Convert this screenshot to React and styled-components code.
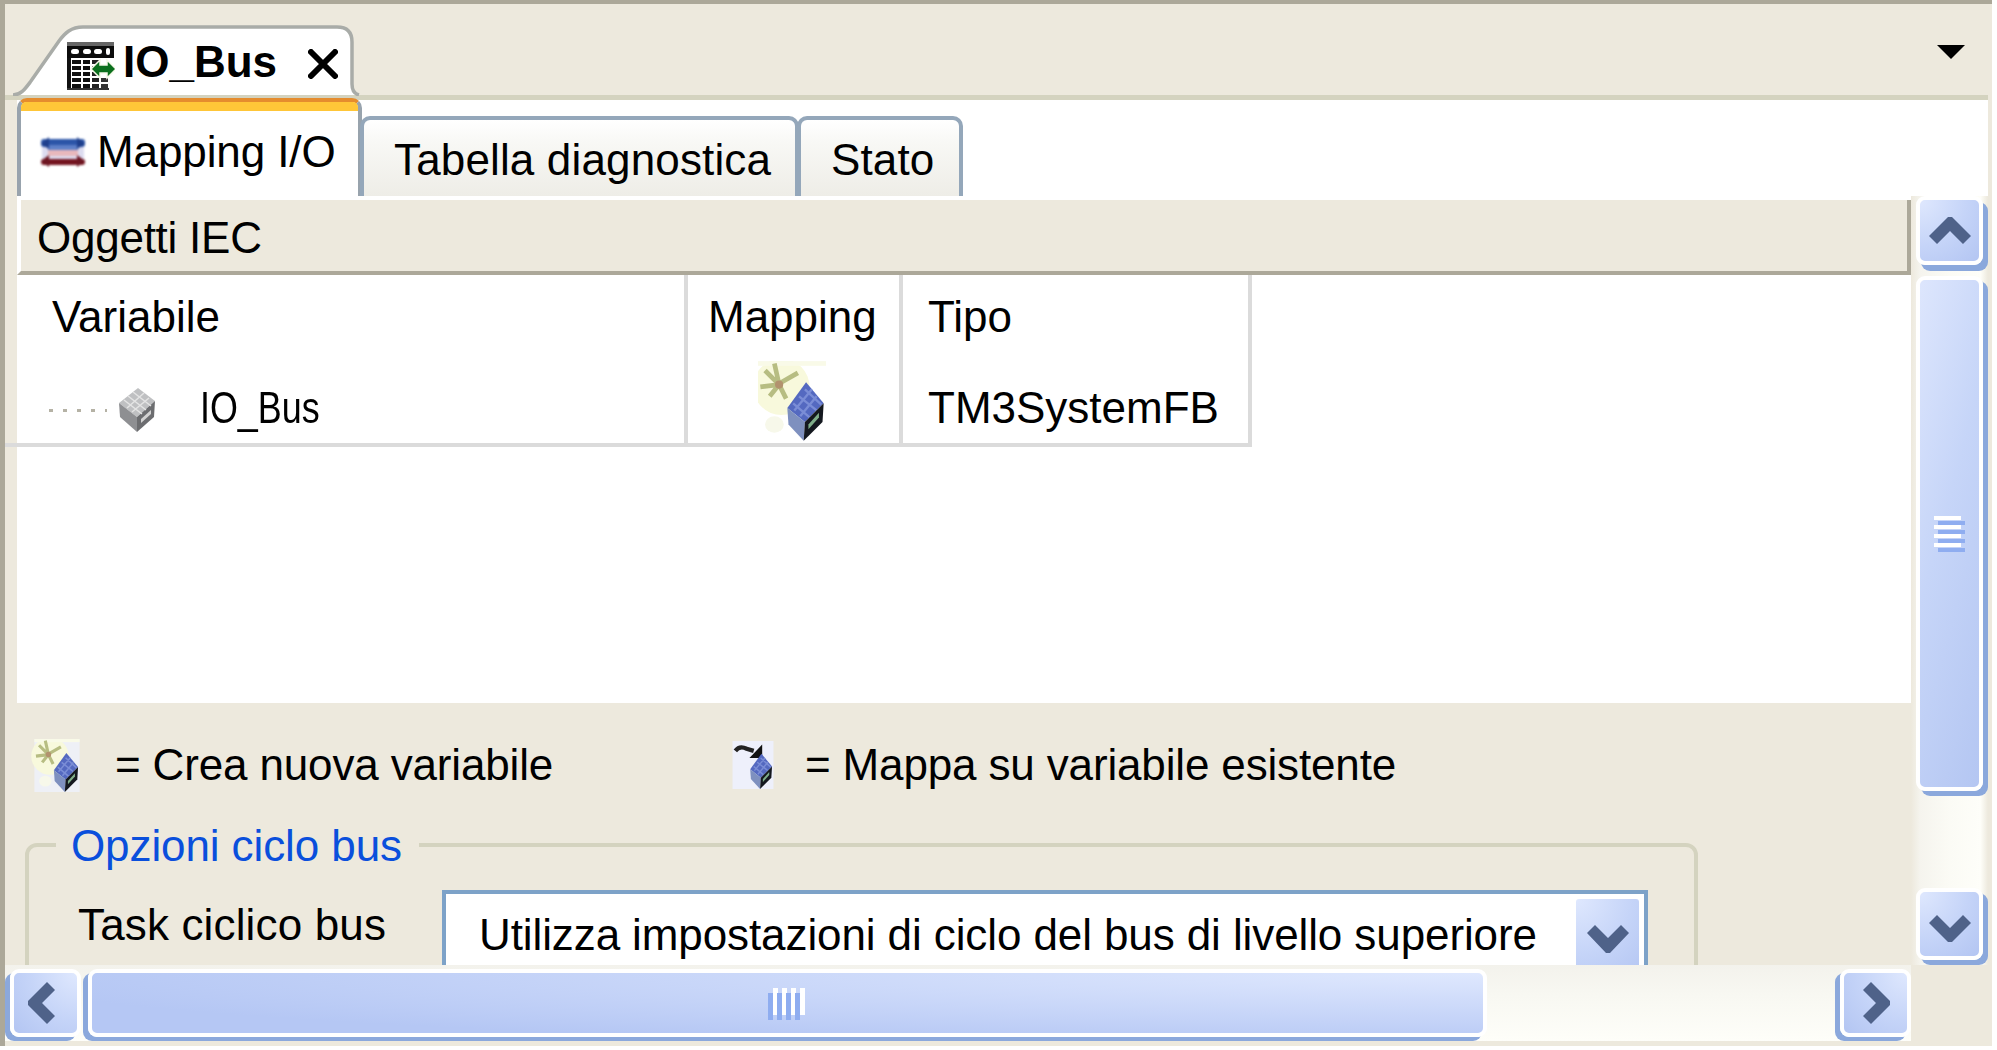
import React from "react";
import styled, { createGlobalStyle } from "styled-components";

const GlobalStyle = createGlobalStyle`
  html, body {
    margin: 0;
    padding: 0;
    background: #fff;
  }
  body {
    font-family: "Liberation Sans", Arial, sans-serif;
    font-size: 44px;
    color: #000;
  }
`;

const Frame = styled.div`
  box-sizing: border-box;
  width: 1992px;
  height: 1046px;
  background: #ede9dd;
  border-top: 4px solid #aca899;
  border-left: 5px solid #aca899;
  display: flex;
  flex-direction: column;
  overflow: hidden;
`;

const DocBar = styled.div`
  flex: none;
  box-sizing: border-box;
  height: 96px;
  margin-right: 4px;
  border-bottom: 5px solid #d4d3bf;
  display: flex;
  justify-content: space-between;
`;

const DocTab = styled.div`
  position: relative;
  width: 354px;
  flex: none;
`;

const DocTabShape = styled.svg`
  position: absolute;
  left: 0;
  top: 0;
`;

const DocTabBody = styled.div`
  position: relative;
  display: flex;
  align-items: flex-start;
  padding: 38px 0 0 62px;
  font-weight: 700;
  line-height: 48px;
`;

const DocTabLabel = styled.span`
  margin: -4px 0 0 8px;
`;

const CloseMark = styled.svg`
  margin: 7px 0 0 31px;
`;

const MenuArrow = styled.div`
  width: 0;
  height: 0;
  margin: 41px 23px 0 0;
  border-left: 14px solid transparent;
  border-right: 14px solid transparent;
  border-top: 14px solid #000;
`;

const Content = styled.div`
  flex: none;
  height: 865px;
  display: flex;
  flex-direction: column;
`;

const TabStrip = styled.div`
  flex: none;
  height: 96px;
  margin: 0 4px 0 12px;
  background: #fff;
  display: flex;
  align-items: flex-end;
`;

const SubTab = styled.div`
  box-sizing: border-box;
  position: relative;
  display: flex;
  align-items: center;
  height: 80px;
  width: ${(p) => p.$width}px;
  padding: 4px 0 0 ${(p) => p.$pad}px;
  background: linear-gradient(#fff 0, #f8f8f5 30%, #eeede7 100%);
  border: 4px solid #94a7ba;
  border-bottom: none;
  border-radius: 10px 10px 0 0;
  line-height: 48px;
  letter-spacing: 0.15px;
  margin-left: -2px;
`;

const ActiveTab = styled.div`
  box-sizing: border-box;
  position: relative;
  height: 98px;
  width: ${(p) => p.$width}px;
  padding-left: ${(p) => p.$pad}px;
  background: #fff;
  border: 4px solid #98a3ad;
  border-top-color: #e58c2e;
  border-bottom: none;
  border-radius: 10px 10px 0 0;
  line-height: 48px;
`;

const ActiveStripe = styled.div`
  position: absolute;
  left: 0;
  right: 0;
  top: 0;
  height: 9px;
  background: #ffc638;
  border-radius: 5px 5px 0 0;
`;

const ActiveInner = styled.div`
  display: flex;
  align-items: center;
  margin-top: 26px;
`;

const TabLabel = styled.span`
  margin-left: 11px;
  letter-spacing: -0.1px;
`;

const Lower = styled.div`
  flex: 1;
  display: flex;
  min-height: 0;
`;

const MainPane = styled.div`
  flex: none;
  box-sizing: border-box;
  width: 1906px;
  padding-left: 12px;
  overflow: hidden;
`;

const ObjectsPane = styled.div`
  height: 507px;
  background: #fff;
  padding-top: 4px;
  box-sizing: border-box;
`;

const SectionHeader = styled.div`
  box-sizing: border-box;
  height: 75px;
  padding-left: 16px;
  background: #ede9dd;
  border-left: 4px solid #fff;
  border-bottom: 4px solid #aca899;
  border-right: 4px solid #aca899;
  line-height: 76px;
  letter-spacing: -0.25px;
`;

const MapTable = styled.div`
  display: grid;
  grid-template-columns: 671px 215px 349px;
  width: 1235px;
  margin-left: -13px;
  padding-left: 13px;
  border-bottom: 4px solid #dbdbdb;
`;

const Cell = styled.div`
  box-sizing: border-box;
  height: 84px;
  padding: ${(p) => p.$top || 0}px 0 0 ${(p) => p.$pad}px;
  border-right: 4px solid #dbdbdb;
  display: flex;
  align-items: center;
  line-height: 48px;
`;

const TreeDots = styled.span`
  width: 58px;
  height: 3px;
  margin: 4px 11px 0 0;
  background: repeating-linear-gradient(90deg, #b5b2a5 0 4px, transparent 4px 14px);
`;

const NarrowName = styled.span`
  display: inline-block;
  margin-left: 44px;
  transform: scaleX(0.815);
  transform-origin: left center;
`;

const LegendRow = styled.div`
  box-sizing: border-box;
  display: flex;
  align-items: center;
  height: 110px;
  padding: 14px 0 0 14px;
`;

const LegendItem = styled.div`
  display: flex;
  align-items: center;
  width: ${(p) => (p.$width ? `${p.$width}px` : "auto")};
`;

const LegendText = styled.span`
  margin-left: ${(p) => p.$gap}px;
  letter-spacing: -0.15px;
`;

const Group = styled.div`
  box-sizing: border-box;
  position: relative;
  width: 1673px;
  height: 300px;
  margin: 30px 0 0 8px;
  border: 4px solid #d4d3bf;
  border-radius: 12px;
`;

const GroupTitle = styled.div`
  position: absolute;
  left: 27px;
  top: -25px;
  padding: 0 17px 0 15px;
  background: #ede9dd;
  color: #0a4fdc;
  line-height: 48px;
  letter-spacing: -0.1px;
`;

const GroupRow = styled.div`
  display: flex;
  margin-top: 43px;
`;

const TaskLabel = styled.span`
  box-sizing: border-box;
  width: 413px;
  margin-top: 11px;
  padding-left: 49px;
  line-height: 48px;
  letter-spacing: 0.15px;
`;

const Combo = styled.div`
  box-sizing: border-box;
  width: 1206px;
  height: 120px;
  border: 4px solid #7da2c8;
  background: #fff;
  display: flex;
  justify-content: space-between;
  padding: 5px 5px 0 33px;
`;

const ComboText = styled.span`
  line-height: 60px;
  padding-top: 6px;
  letter-spacing: -0.1px;
`;

const ComboButton = styled.div`
  box-sizing: border-box;
  width: 63px;
  height: 80px;
  border-radius: 3px;
  padding-top: 26px;
  display: flex;
  justify-content: center;
  align-items: flex-start;
  background: radial-gradient(circle at 0 0, #dfe8fe 0, #c5d4f8 55%, #b3c5f2 100%);
`;

const VScroll = styled.div`
  flex: none;
  box-sizing: border-box;
  width: 77px;
  padding: 0 5px;
  display: flex;
  flex-direction: column;
  background: linear-gradient(90deg, #ede9dd 0, #f5f4ee 12%, #fbfbf5 50%, #fefef9 90%, #ede9dd 100%);
`;

const HScroll = styled.div`
  flex: none;
  box-sizing: border-box;
  width: 1906px;
  height: 76px;
  padding: 4px 0;
  display: flex;
  align-items: stretch;
  background: linear-gradient(180deg, #f3f2ec 0, #f8f8f2 40%, #fefef9 100%);
`;

const ScrollPart = styled.div`
  box-sizing: border-box;
  flex: none;
  width: ${(p) => (p.$w ? `${p.$w}px` : "auto")};
  height: ${(p) => (p.$h ? `${p.$h}px` : "auto")};
  margin: ${(p) => p.$mt || 0}px 0 0 ${(p) => p.$ml || 0}px;
  padding: ${(p) => p.$pt || 0}px ${(p) => p.$pr || 0}px 0 0;
  border: 4px solid #fff;
  border-radius: 9px;
  background: radial-gradient(circle at ${(p) => p.$from || "100% 0"}, #dfe8fe 0, #c5d4f8 55%, #b3c5f2 100%);
  box-shadow: ${(p) => p.$shadow || "5px 5px 0 #8ba8dc"};
  display: flex;
  align-items: center;
  justify-content: center;
`;

const VThumb = styled(ScrollPart)`
  background: linear-gradient(105deg, #dde6fd 0, #c6d5f8 45%, #b4c6f2 100%);
`;

const HThumb = styled(ScrollPart)`
  background: radial-gradient(ellipse 1500px 75px at 100% 0, #dfe8fe 0, #b5c7f4 100%);
`;

const VGripBar = styled.div`
  width: 27px;
  height: 4px;
  margin-bottom: 5px;
  background: #fff;
  box-shadow: 4px 5px 0 #8fadf0;
`;

const HGripBar = styled.div`
  width: 5px;
  height: 27px;
  margin-right: 4px;
  background: #fff;
  box-shadow: -5px 5px 0 #8fadf0;
`;

const Grip = styled.div`
  display: flex;
  flex-direction: ${(p) => (p.$column ? "column" : "row")};
  margin-right: ${(p) => p.$shift || 0}px;
  margin-bottom: ${(p) => p.$lift || 0}px;
`;

const Chevron = ({ dir }) => {
  const turn = { up: 0, right: 90, down: 180, left: 270 }[dir];
  return (
    <svg width="42" height="42" viewBox="0 0 42 42">
      <polygon
        points="19,7 23,7 42,26 34,34 21,21 8,34 0,26"
        fill="#4f6289"
        transform={`rotate(${turn} 21 21)`}
      />
    </svg>
  );
};

const FlatChevron = styled.svg`
  flex: none;
`;

const DownChevron = () => (
  <FlatChevron width="42" height="28" viewBox="0 0 42 28">
    <polygon points="19,28 23,28 42,8 34,0 21,13 8,0 0,8" fill="#4f6289" />
  </FlatChevron>
);

const IconBox = styled.svg`
  flex: none;
  filter: blur(${(p) => p.$blur || 0.5}px);
  margin-top: ${(p) => p.$mt || 0}px;
`;

const TableIcon = () => (
  <IconBox width="48" height="48" viewBox="0 0 48 48" $blur={0.5}>
    <rect width="48" height="48" fill="#fff" />
    <rect x="0" y="0" width="47" height="4" fill="#666" />
    <rect x="0" y="4" width="47" height="12" fill="#0c0c0c" />
    <rect x="4" y="7" width="8" height="5" rx="2.5" fill="#fff" />
    <rect x="16" y="7" width="8" height="5" rx="2.5" fill="#fff" />
    <rect x="27" y="7" width="8" height="5" rx="2.5" fill="#fff" />
    <rect x="39" y="6" width="4" height="7" rx="2" fill="#fff" />
    <rect x="0" y="16" width="4" height="32" fill="#111" />
    {[18, 24, 30, 36, 42].map((y) => (
      <g key={y}>
        <rect x="5" y={y} width="9" height="4" fill="#111" />
        <rect x="16" y={y} width="7" height="4" fill="#111" />
        <rect x="25" y={y} width="7" height="4" fill="#222" />
        <rect x="34" y={y} width="7" height="4" fill="#333" opacity={y > 32 ? 1 : 0} />
      </g>
    ))}
    <rect x="0" y="46" width="42" height="2" fill="#333" />
    <polygon points="24,27 33,18 33,23 40,23 40,18 49,27 40,36 40,31 33,31 33,36" fill="#0b6f1d" stroke="#f6f8e8" strokeWidth="1.5" />
  </IconBox>
);

const MappingIcon = () => (
  <IconBox width="46" height="32" viewBox="0 0 46 32" $blur={0.9}>
    <rect x="2" y="11" width="42" height="12" fill="#dcdcf0" />
    <rect x="8" y="14" width="30" height="6" fill="#e8b8bc" />
    <rect x="1" y="3" width="44" height="8" rx="3" fill="#2c55a8" />
    <rect x="8" y="9" width="30" height="5" fill="#5f80c8" />
    <polygon points="1,8 9,1 9,13" fill="#1f3f8c" />
    <polygon points="45,8 37,1 37,13" fill="#1f3f8c" />
    <rect x="1" y="23" width="44" height="6" rx="3" fill="#74141f" />
    <polygon points="1,25 9,19 9,31" fill="#6d1622" />
    <polygon points="45,25 37,19 37,31" fill="#6d1622" />
  </IconBox>
);

const GrayCube = () => (
  <IconBox width="38" height="46" viewBox="0 0 38 46" $mt={4} $blur={0.7}>
    <polygon points="20,1 37,14 19,30 1,16" fill="#bfc0c2" />
    <polygon points="1,16 19,30 19,45 2,30" fill="#8e8f92" />
    <polygon points="19,30 37,14 36,30 19,45" fill="#6c6d70" />
    <path d="M10,9 L28,23 M15,5 L33,19 M6,13 L24,27 M26,6 L9,21 M31,11 L14,25" stroke="#e4e4e4" strokeWidth="1.5" />
    <polygon points="23,32 33,23 33,27 23,36" fill="#d2d2d2" />
  </IconBox>
);

const MapCube = ({ link, width = 68, height = 80, tint = "#fff" }) => (
  <IconBox width={width} height={height} viewBox="0 0 58 68" $blur={0.7}>
    <rect width="58" height="68" fill={tint} />
    {link === "new" ? (
      <g>
        <ellipse cx="20" cy="22" rx="24" ry="24" fill="#f8f9dc" />
        <rect x="0" y="0" width="58" height="4" fill="#f9fae8" />
        <path d="M6,8 L18,20 M14,2 L18,20 M2,22 L18,20 M18,20 L24,32 M34,10 L20,18 M10,30 L18,20" stroke="#b7bd82" strokeWidth="4" />
        <circle cx="18" cy="20" r="3.5" fill="#b2926e" />
        <ellipse cx="14" cy="54" rx="8" ry="7" fill="#f7f8ea" />
      </g>
    ) : (
      <g>
        <path d="M4,14 Q10,6 20,11 L30,14" stroke="#222" strokeWidth="6" fill="none" />
        <polygon points="24,24 42,5 42,24" fill="#111" />
      </g>
    )}
    <polygon points="41,18 56,36 40,52 25,40" fill="#5469c0" />
    <path d="M30,36 L44,48 M35,30 L50,42 M40,24 L54,37 M46,24 L31,42 M50,30 L36,47" stroke="#7a8dd6" strokeWidth="2" />
    <polygon points="25,40 40,52 39,68 26,54" fill="#7e90bf" />
    <polygon points="40,52 56,36 55,52 39,68" fill="#14181f" />
    <polygon points="43,54 52,44 52,48 43,58" fill="#7fae8a" />
  </IconBox>
);

const App = () => (
  <>
    <GlobalStyle />
    <Frame>
      <DocBar>
        <DocTab>
          <DocTabShape width="358" height="92" viewBox="0 0 358 92">
            <path
              d="M8,91 C16,91 20,85 26,77 L54,37 C60,29 66,23 78,23 L332,23 C342,23 347,28 347,38 L347,80 C347,87 350,90 354,91 Z"
              fill="#fff"
            />
            <path
              d="M8,91 C16,91 20,85 26,77 L54,37 C60,29 66,23 78,23 L332,23 C342,23 347,28 347,38 L347,80 C347,87 350,90 354,91"
              fill="none"
              stroke="#a9aca8"
              strokeWidth="3.5"
            />
          </DocTabShape>
          <DocTabBody>
            <TableIcon />
            <DocTabLabel>IO_Bus</DocTabLabel>
            <CloseMark width="30" height="30" viewBox="0 0 30 30">
              <path d="M3,3 L27,27 M27,3 L3,27" stroke="#000" strokeWidth="6" strokeLinecap="round" />
            </CloseMark>
          </DocTabBody>
        </DocTab>
        <MenuArrow />
      </DocBar>
      <Content>
        <TabStrip>
          <ActiveTab $width={345} $pad={19}>
            <ActiveStripe />
            <ActiveInner>
              <MappingIcon />
              <TabLabel>Mapping I/O</TabLabel>
            </ActiveInner>
          </ActiveTab>
          <SubTab $width={439} $pad={30}>
            Tabella diagnostica
          </SubTab>
          <SubTab $width={166} $pad={30}>
            Stato
          </SubTab>
        </TabStrip>
        <Lower>
          <MainPane>
            <ObjectsPane>
              <SectionHeader>Oggetti IEC</SectionHeader>
              <MapTable>
                <Cell $pad={35}>Variabile</Cell>
                <Cell $pad={20}>Mapping</Cell>
                <Cell $pad={25}>Tipo</Cell>
                <Cell $pad={32} $top={14}>
                  <TreeDots />
                  <GrayCube />
                  <NarrowName>IO_Bus</NarrowName>
                </Cell>
                <Cell $pad={70}>
                  <MapCube link="new" />
                </Cell>
                <Cell $pad={25} $top={14}>
                  TM3SystemFB
                </Cell>
              </MapTable>
            </ObjectsPane>
            <LegendRow>
              <LegendItem $width={697}>
                <MapCube link="new" width={52} height={53} tint="#eef0f6" />
                <LegendText $gap={32}>= Crea nuova variabile</LegendText>
              </LegendItem>
              <LegendItem>
                <MapCube link="existing" width={50} height={48} tint="#eef0fb" />
                <LegendText $gap={27}>= Mappa su variabile esistente</LegendText>
              </LegendItem>
            </LegendRow>
            <Group>
              <GroupTitle>Opzioni ciclo bus</GroupTitle>
              <GroupRow>
                <TaskLabel>Task ciclico bus</TaskLabel>
                <Combo>
                  <ComboText>Utilizza impostazioni di ciclo del bus di livello superiore</ComboText>
                  <ComboButton>
                    <DownChevron />
                  </ComboButton>
                </Combo>
              </GroupRow>
            </Group>
          </MainPane>
          <VScroll>
            <ScrollPart $h={69} $shadow="5px 6px 0 #8ba8dc" $from="0 0">
              <Chevron dir="up" />
            </ScrollPart>
            <VThumb $h={515} $mt={11}>
              <Grip $column $shift={4}>
                <VGripBar />
                <VGripBar />
                <VGripBar />
                <VGripBar />
              </Grip>
            </VThumb>
            <ScrollPart $h={72} $mt={97} $pt={8} $from="0 0">
              <Chevron dir="down" />
            </ScrollPart>
          </VScroll>
        </Lower>
      </Content>
      <HScroll>
        <ScrollPart $w={71} $ml={5} $pr={8} $shadow="-5px 4px 0 #8ba8dc">
          <Chevron dir="left" />
        </ScrollPart>
        <HThumb $w={1399} $ml={7} $shadow="-5px 4px 0 #8ba8dc">
          <Grip $shift={-6} $lift={4}>
            <HGripBar />
            <HGripBar />
            <HGripBar />
            <HGripBar />
          </Grip>
        </HThumb>
        <ScrollPart $w={71} $ml={353} $shadow="-5px 4px 0 #8ba8dc">
          <Chevron dir="right" />
        </ScrollPart>
      </HScroll>
    </Frame>
  </>
);

export default App;
